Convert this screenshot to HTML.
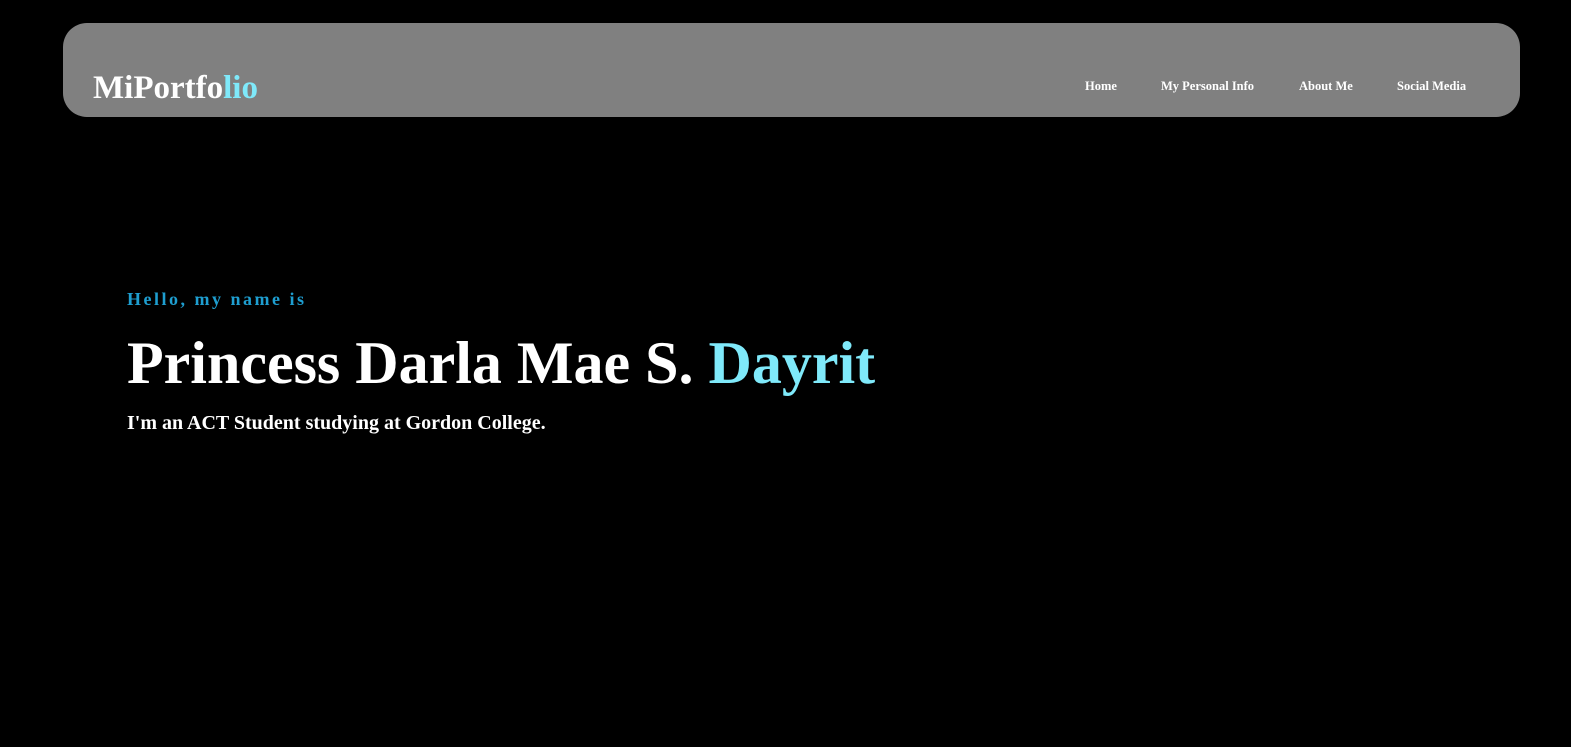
<!DOCTYPE html>
<html><head><style>
body{margin:0;background:#000;width:1571px;height:747px;overflow:hidden;font-family:"Liberation Serif",serif;font-weight:bold;color:#fff}
.nav{position:absolute;left:63px;top:23px;width:1457px;height:94px;background:#808080;border-radius:24px}
.logo{position:absolute;left:30px;top:47px;font-size:33px;line-height:36px}
.c{color:#7fe9fa}
.links{position:absolute;top:56px;font-size:12.5px}
.links span{position:absolute;white-space:nowrap}
.h5{position:absolute;left:127px;top:289px;font-size:18px;letter-spacing:2.5px;color:#1e9ed0}
.h1{position:absolute;left:127px;top:328px;font-size:60px;line-height:70px}
.p{position:absolute;left:127px;top:412px;font-size:20px}
</style></head><body>
<div class="nav">
<div class="logo">MiPortfo<span class="c">lio</span></div>
<div class="links">
<span style="left:1022px">Home</span>
<span style="left:1098px">My Personal Info</span>
<span style="left:1236px">About Me</span>
<span style="left:1334px">Social Media</span>
</div></div>
<div class="h5">Hello, my name is</div>
<div class="h1">Princess Darla Mae S. <span class="c">Dayrit</span></div>
<div class="p">I'm an ACT Student studying at Gordon College.</div>
</body></html>
